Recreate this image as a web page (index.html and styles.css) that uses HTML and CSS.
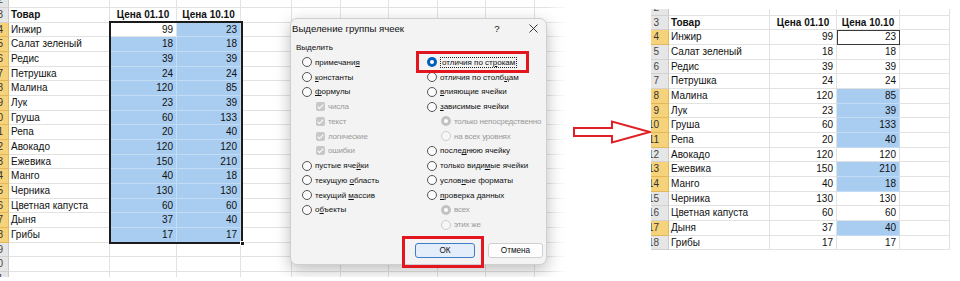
FILE: index.html
```html
<!DOCTYPE html>
<html lang="ru">
<head>
<meta charset="UTF-8">
<title>Выделение группы ячеек</title>
<link rel="stylesheet" href="styles.css">
</head>
<body>
  <div class="left">
    <div class="sheet">
      <div class="row"><div class="rh">2</div><div class="c a"></div><div class="c b"></div><div class="c cc"></div><div class="c d"></div><div class="c rest"></div></div>
      <div class="row"><div class="rh">3</div><div class="c a hd">Товар</div><div class="c b hd ctr">Цена 01.10</div><div class="c cc hd ctr">Цена 10.10</div><div class="c d"></div><div class="c rest"></div></div>
      <div class="row"><div class="rh sel">4</div><div class="c a">Инжир</div><div class="c b num">99</div><div class="c cc num hl">23</div><div class="c d"></div><div class="c rest"></div></div>
      <div class="row"><div class="rh sel">5</div><div class="c a">Салат зеленый</div><div class="c b num hl">18</div><div class="c cc num hl">18</div><div class="c d"></div><div class="c rest"></div></div>
      <div class="row"><div class="rh sel">6</div><div class="c a">Редис</div><div class="c b num hl">39</div><div class="c cc num hl">39</div><div class="c d"></div><div class="c rest"></div></div>
      <div class="row"><div class="rh sel">7</div><div class="c a">Петрушка</div><div class="c b num hl">24</div><div class="c cc num hl">24</div><div class="c d"></div><div class="c rest"></div></div>
      <div class="row"><div class="rh sel">8</div><div class="c a">Малина</div><div class="c b num hl">120</div><div class="c cc num hl">85</div><div class="c d"></div><div class="c rest"></div></div>
      <div class="row"><div class="rh sel">9</div><div class="c a">Лук</div><div class="c b num hl">23</div><div class="c cc num hl">39</div><div class="c d"></div><div class="c rest"></div></div>
      <div class="row"><div class="rh sel">10</div><div class="c a">Груша</div><div class="c b num hl">60</div><div class="c cc num hl">133</div><div class="c d"></div><div class="c rest"></div></div>
      <div class="row"><div class="rh sel">11</div><div class="c a">Репа</div><div class="c b num hl">20</div><div class="c cc num hl">40</div><div class="c d"></div><div class="c rest"></div></div>
      <div class="row"><div class="rh sel">12</div><div class="c a">Авокадо</div><div class="c b num hl">120</div><div class="c cc num hl">120</div><div class="c d"></div><div class="c rest"></div></div>
      <div class="row"><div class="rh sel">13</div><div class="c a">Ежевика</div><div class="c b num hl">150</div><div class="c cc num hl">210</div><div class="c d"></div><div class="c rest"></div></div>
      <div class="row"><div class="rh sel">14</div><div class="c a">Манго</div><div class="c b num hl">40</div><div class="c cc num hl">18</div><div class="c d"></div><div class="c rest"></div></div>
      <div class="row"><div class="rh sel">15</div><div class="c a">Черника</div><div class="c b num hl">130</div><div class="c cc num hl">130</div><div class="c d"></div><div class="c rest"></div></div>
      <div class="row"><div class="rh sel">16</div><div class="c a">Цветная капуста</div><div class="c b num hl">60</div><div class="c cc num hl">60</div><div class="c d"></div><div class="c rest"></div></div>
      <div class="row"><div class="rh sel">17</div><div class="c a">Дыня</div><div class="c b num hl">37</div><div class="c cc num hl">40</div><div class="c d"></div><div class="c rest"></div></div>
      <div class="row"><div class="rh sel">18</div><div class="c a">Грибы</div><div class="c b num hl">17</div><div class="c cc num hl">17</div><div class="c d"></div><div class="c rest"></div></div>
      <div class="row"><div class="rh">19</div><div class="c a"></div><div class="c b"></div><div class="c cc"></div><div class="c d"></div><div class="c rest"></div></div>
      <div class="row"><div class="rh">20</div><div class="c a"></div><div class="c b"></div><div class="c cc"></div><div class="c d"></div><div class="c rest"></div></div>
      <div class="row"><div class="rh">21</div><div class="c a"></div><div class="c b"></div><div class="c cc"></div><div class="c d"></div><div class="c rest"></div></div>
    </div>

    <div class="selbox"><span class="handle"></span></div>

    <div class="dialog">
      <div class="dlg-title">
        <span class="title">Выделение группы ячеек</span>
        <span class="help">?</span>
        <span class="close">
          <svg width="9" height="9" viewBox="0 0 9 9"><path d="M0.5 0.5L8.5 8.5M8.5 0.5L0.5 8.5" stroke="#222" stroke-width="0.9"/></svg>
        </span>
      </div>
      <div class="group-label">Выделить</div>
      <div class="options">
        <div class="col">
          <div class="opt"><span class="radio"></span><span>примечани<u>я</u></span></div>
          <div class="opt"><span class="radio"></span><span><u>к</u>онстанты</span></div>
          <div class="opt"><span class="radio"></span><span><u>ф</u>ормулы</span></div>
          <div class="opt sub"><span class="check"></span><span>числа</span></div>
          <div class="opt sub"><span class="check"></span><span>текст</span></div>
          <div class="opt sub"><span class="check"></span><span>логические</span></div>
          <div class="opt sub"><span class="check"></span><span>ошибки</span></div>
          <div class="opt"><span class="radio"></span><span>пустые яче<u>й</u>ки</span></div>
          <div class="opt"><span class="radio"></span><span>текущую <u>о</u>бласть</span></div>
          <div class="opt"><span class="radio"></span><span>текущий <u>м</u>ассив</span></div>
          <div class="opt"><span class="radio"></span><span>о<u>б</u>ъекты</span></div>
        </div>
        <div class="col">
          <div class="opt"><span class="radio on"></span><span class="focus">отличия по ст<u>р</u>окам</span></div>
          <div class="opt"><span class="radio"></span><span>отличия по столб<u>ц</u>ам</span></div>
          <div class="opt"><span class="radio"></span><span><u>в</u>лияющие ячейки</span></div>
          <div class="opt"><span class="radio"></span><span><u>з</u>ависимые ячейки</span></div>
          <div class="opt sub"><span class="radio dis on"></span><span>только непосредственно</span></div>
          <div class="opt sub"><span class="radio dis"></span><span>на всех уровнях</span></div>
          <div class="opt"><span class="radio"></span><span>после<u>д</u>нюю ячейку</span></div>
          <div class="opt"><span class="radio"></span><span>только види<u>м</u>ые ячейки</span></div>
          <div class="opt"><span class="radio"></span><span>услов<u>н</u>ые форматы</span></div>
          <div class="opt"><span class="radio"></span><span><u>п</u>роверка данных</span></div>
          <div class="opt sub"><span class="radio dis on"></span><span>всех</span></div>
          <div class="opt sub"><span class="radio dis"></span><span>этих же</span></div>
        </div>
      </div>
      <div class="dlg-buttons">
        <button class="btn default">ОК</button>
        <button class="btn">Отмена</button>
      </div>
    </div>

    <div class="mark mark-diff"></div>
    <div class="mark mark-ok"></div>
  </div>

  <div class="arrow">
    <svg width="79" height="26" viewBox="0 0 79 26">
      <path d="M2 9H40V2.5L78 13L40 23.5V17H2Z" fill="#fff" stroke="#e01f26" stroke-width="2" stroke-linejoin="miter"/>
    </svg>
  </div>

  <div class="right">
    <div class="sheet">
      <div class="row"><div class="rh">2</div><div class="c a"></div><div class="c b"></div><div class="c cc"></div><div class="c d"></div></div>
      <div class="row"><div class="rh">3</div><div class="c a hd">Товар</div><div class="c b hd ctr">Цена 01.10</div><div class="c cc hd ctr">Цена 10.10</div><div class="c d"></div></div>
      <div class="row"><div class="rh sel">4</div><div class="c a">Инжир</div><div class="c b num">99</div><div class="c cc num active">23</div><div class="c d"></div></div>
      <div class="row"><div class="rh">5</div><div class="c a">Салат зеленый</div><div class="c b num">18</div><div class="c cc num">18</div><div class="c d"></div></div>
      <div class="row"><div class="rh">6</div><div class="c a">Редис</div><div class="c b num">39</div><div class="c cc num">39</div><div class="c d"></div></div>
      <div class="row"><div class="rh">7</div><div class="c a">Петрушка</div><div class="c b num">24</div><div class="c cc num">24</div><div class="c d"></div></div>
      <div class="row"><div class="rh sel">8</div><div class="c a">Малина</div><div class="c b num">120</div><div class="c cc num hl">85</div><div class="c d"></div></div>
      <div class="row"><div class="rh sel">9</div><div class="c a">Лук</div><div class="c b num">23</div><div class="c cc num hl">39</div><div class="c d"></div></div>
      <div class="row"><div class="rh sel">10</div><div class="c a">Груша</div><div class="c b num">60</div><div class="c cc num hl">133</div><div class="c d"></div></div>
      <div class="row"><div class="rh sel">11</div><div class="c a">Репа</div><div class="c b num">20</div><div class="c cc num hl">40</div><div class="c d"></div></div>
      <div class="row"><div class="rh">12</div><div class="c a">Авокадо</div><div class="c b num">120</div><div class="c cc num">120</div><div class="c d"></div></div>
      <div class="row"><div class="rh sel">13</div><div class="c a">Ежевика</div><div class="c b num">150</div><div class="c cc num hl">210</div><div class="c d"></div></div>
      <div class="row"><div class="rh sel">14</div><div class="c a">Манго</div><div class="c b num">40</div><div class="c cc num hl">18</div><div class="c d"></div></div>
      <div class="row"><div class="rh">15</div><div class="c a">Черника</div><div class="c b num">130</div><div class="c cc num">130</div><div class="c d"></div></div>
      <div class="row"><div class="rh">16</div><div class="c a">Цветная капуста</div><div class="c b num">60</div><div class="c cc num">60</div><div class="c d"></div></div>
      <div class="row"><div class="rh sel">17</div><div class="c a">Дыня</div><div class="c b num">37</div><div class="c cc num hl">40</div><div class="c d"></div></div>
      <div class="row"><div class="rh">18</div><div class="c a">Грибы</div><div class="c b num">17</div><div class="c cc num">17</div><div class="c d"></div></div>
    </div>
  </div>
</body>
</html>
```

FILE: styles.css
```css
* {
    box-sizing: border-box;
}
body {
    margin: 0;
    width: 960px;
    height: 281px;
    overflow: hidden;
    background: #fff;
    font-family: "Liberation Sans", Arial, sans-serif;
    display: flex;
    align-items: flex-start;
}

/* sheets */
.sheet {
    font-size: 10px;
    color: #111;
}
.row {
    display: flex;
    height: 14.67px;
}
.rh {
    width: 26px;
    flex: none;
    background: #e6e6e6;
    border-right: 1px solid #c9c9c9;
    border-bottom: 1px solid #d2d2d2;
    color: #444;
    text-align: right;
    padding-right: 5px;
    line-height: 13.67px;
}
.rh.sel {
    background: #f6d27a;
    border-color: #e2b95a;
    color: #333;
}
.c {
    flex: none;
    border-right: 1px solid #e2e2e2;
    border-bottom: 1px solid #e2e2e2;
    line-height: 13.67px;
    padding: 0 2px;
    white-space: nowrap;
    overflow: hidden;
}
.a { width: 101px; }
.b { width: 67px; }
.cc { width: 64px; }
.d { width: 51px; }
.rest {
    flex: 1;
    background: repeating-linear-gradient(to right, transparent 0 47.6px, #e2e2e2 47.6px 48.6px);
    border-right: none;
}
.hd { font-weight: bold; }
.ctr { text-align: center; }
.num { text-align: right; padding-right: 3px; }
.hl {
    background: #a9cdf0;
    border-color: #c3dbf3;
}

/* left screenshot */
.left {
    position: relative;
    width: 572px;
    height: 277px;
    flex: none;
    overflow: hidden;
}
.left .sheet {
    margin-top: -6.67px;
    margin-left: -17px;
}
.left::after {
    content: "";
    position: absolute;
    top: 0;
    right: 0;
    width: 26px;
    height: 100%;
    background: linear-gradient(to right, rgba(255,255,255,0), #fff 85%);
}
.selbox {
    position: absolute;
    left: 109px;
    top: 21px;
    width: 134px;
    height: 223px;
    border: 2px solid #1b1b1b;
}
.handle {
    position: absolute;
    right: -4px;
    bottom: -4px;
    width: 5px;
    height: 5px;
    background: #1b1b1b;
    border: 1px solid #fff;
}

/* dialog */
.dialog {
    position: absolute;
    left: 290px;
    top: 18px;
    width: 257px;
    height: 247px;
    background: #f3f3f3;
    border: 1px solid #cfcfcf;
    border-radius: 7px;
    box-shadow: 0 5px 16px rgba(0, 0, 0, 0.26);
    font-size: 8px;
    color: #111;
    display: flex;
    flex-direction: column;
    z-index: 1;
}
.dlg-title {
    display: flex;
    align-items: center;
    height: 18px;
    padding: 0 6px 0 1px;
    font-size: 9.6px;
}
.dlg-title .title {
    flex: 1;
}
.help {
    width: 14px;
    text-align: center;
    margin-right: 22px;
}
.close {
    width: 14px;
    display: flex;
    justify-content: center;
}
.group-label {
    margin: 5px 0 0 5px;
    height: 13px;
    line-height: 12px;
}
.options {
    display: grid;
    grid-template-columns: 125px 1fr;
    padding-left: 11px;
}
.opt {
    display: flex;
    align-items: center;
    gap: 3px;
    height: 14.75px;
    white-space: nowrap;
}
.opt.sub {
    padding-left: 14px;
    color: #9a9a9a;
    letter-spacing: -0.2px;
}
.radio {
    width: 10px;
    height: 10px;
    flex: none;
    border-radius: 50%;
    border: 1px solid #555;
    background: #fbfbfb;
}
.radio.on {
    border: none;
    background: #fff;
    box-shadow: inset 0 0 0 3px #005fb8;
}
.radio.dis {
    border-color: #cdcdcd;
    background: #f6f6f6;
}
.radio.dis.on {
    border: none;
    background: #fff;
    box-shadow: inset 0 0 0 3px #c2c2c2;
}
.check {
    position: relative;
    width: 9px;
    height: 9px;
    flex: none;
    border-radius: 2px;
    background: #c8c8c8;
}
.check::after {
    content: "";
    position: absolute;
    left: 3px;
    top: 1px;
    width: 2px;
    height: 5px;
    border: solid #fff;
    border-width: 0 1px 1px 0;
    transform: rotate(45deg);
}
.focus {
    border: 1px dotted #222;
    padding: 0 1px;
    line-height: 9px;
}
.dlg-buttons {
    margin-top: auto;
    display: flex;
    justify-content: flex-end;
    gap: 13px;
    padding: 0 3px 6px;
}
.btn {
    height: 15px;
    width: 55px;
    font: 8.2px "Liberation Sans", Arial, sans-serif;
    color: #111;
    background: #fdfdfd;
    border: 1px solid #d0d0d0;
    border-radius: 3px;
    padding: 0;
}
.btn.default {
    width: 60px;
    background: #e4eefa;
    border-color: #3d7cc9;
}

/* red annotations */
.mark {
    position: absolute;
    border: 3px solid #e3161f;
    z-index: 2;
}
.mark-diff {
    left: 416px;
    top: 51px;
    width: 113px;
    height: 22px;
}
.mark-ok {
    left: 402px;
    top: 236px;
    width: 82px;
    height: 32px;
}

/* arrow */
.arrow {
    width: 79px;
    flex: none;
    padding-top: 119px;
}
.arrow svg {
    display: block;
}

/* right screenshot */
.right {
    width: 309px;
    flex: none;
    margin-top: 9px;
    overflow: hidden;
}
.right .sheet {
    margin-top: -8px;
    margin-left: -8px;
}
.right .rh {
    padding-right: 9px;
}
.right .cc { width: 63px; }
.right .d { width: 50px; }
.active {
    outline: 1px solid #3a3a3a;
    outline-offset: -1px;
}
```
